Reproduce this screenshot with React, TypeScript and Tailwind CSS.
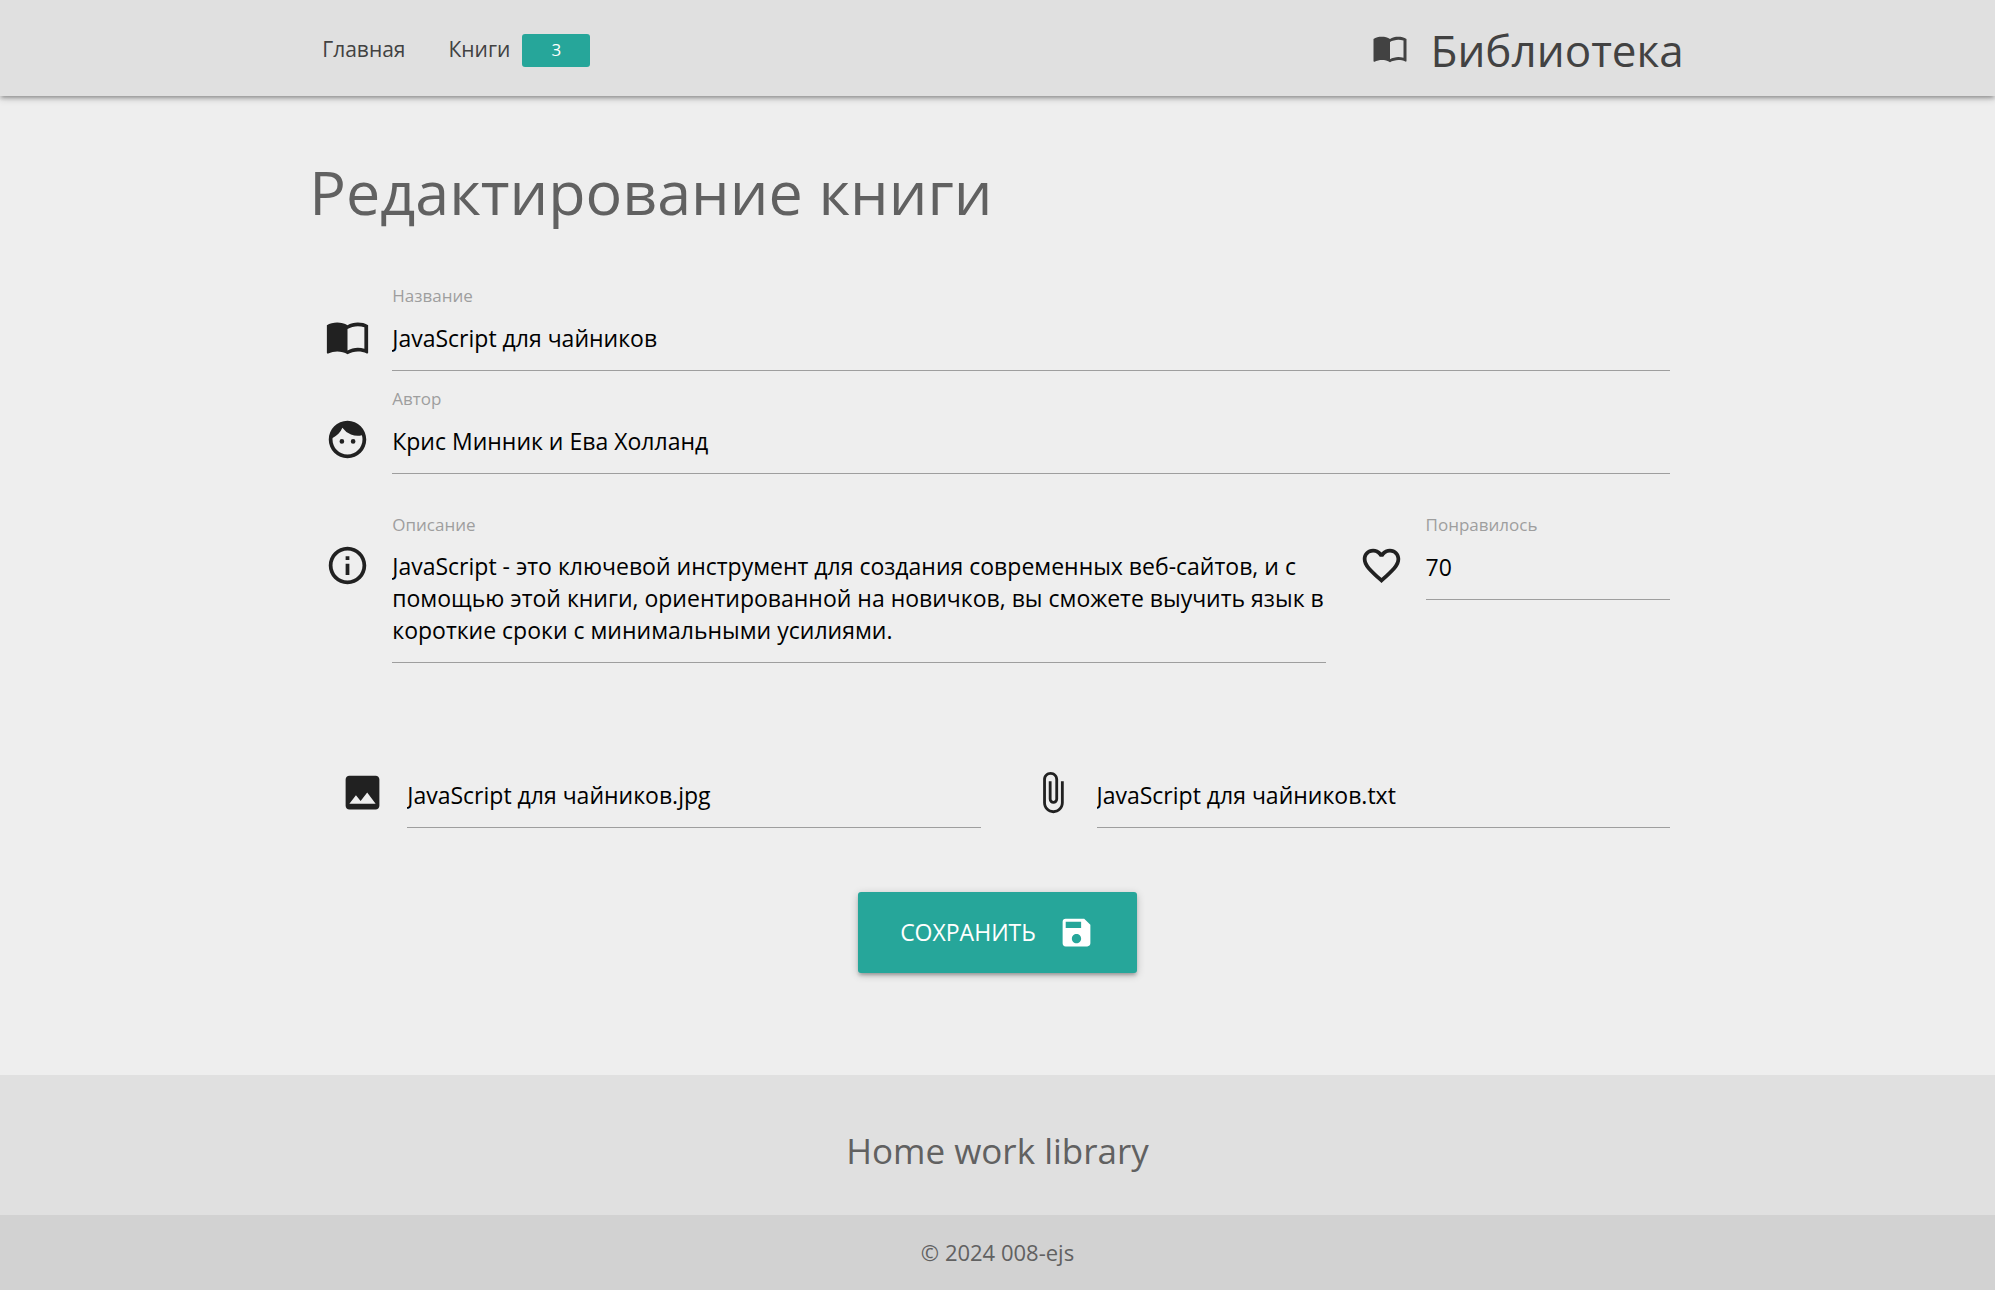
import type { ReactNode } from "react";
import type { IconType } from "react-icons";
import {
  MdAttachFile,
  MdFace,
  MdFavoriteBorder,
  MdImage,
  MdImportContacts,
  MdOutlineInfo,
  MdSave,
} from "react-icons/md";

const inputClass =
  "block h-[62px] w-full border-b border-[#9e9e9e] bg-transparent pb-[3px] text-[23px] text-black outline-none";

type FieldProps = {
  icon: IconType;
  id: string;
  label: string;
  children: ReactNode;
};

function Field({ icon: Icon, id, label, children }: FieldProps) {
  return (
    <div className="flex gap-[22px]">
      <Icon className="mt-[31px] size-[45px] shrink-0 text-[#212121]" aria-hidden />
      <div className="min-w-0 flex-1">
        <label htmlFor={id} className="block text-[17px] leading-[26px] text-[#9e9e9e]">
          {label}
        </label>
        {children}
      </div>
    </div>
  );
}

function FileField({ icon: Icon, id, label, value }: { icon: IconType; id: string; label: string; value: string }) {
  return (
    <div className="flex gap-[22px]">
      <Icon className="mt-1 size-[45px] shrink-0 text-[#212121]" aria-hidden />
      <input id={id} aria-label={label} type="text" defaultValue={value} className={inputClass + " min-w-0 flex-1"} />
    </div>
  );
}

export default function App() {
  return (
    <div className="flex min-h-screen flex-col bg-[#eeeeee] font-['Open_Sans','Noto_Sans',sans-serif] text-[#616161]">
      <header className="bg-[#e0e0e0] text-[#424242] shadow-[0_3px_3px_0_rgba(0,0,0,0.14),0_4px_2px_-3px_rgba(0,0,0,0.12),0_2px_8px_0_rgba(0,0,0,0.2)]">
        <nav className="mx-auto flex h-24 w-[70%] items-center justify-between pt-1 pr-3 pl-[23px]">
          <div className="flex items-center gap-[43px] text-[21px]">
            <a href="#home">Главная</a>
            <a href="#books" className="flex items-center gap-3">
              Книги
              <span className="flex h-[33px] w-[68px] items-center justify-center rounded-[3px] bg-[#26a69a] text-[17px] text-white">
                3
              </span>
            </a>
          </div>
          <a href="#library" className="flex items-center gap-[22px] text-[44px]">
            <MdImportContacts className="mb-1 size-9" aria-hidden />
            Библиотека
          </a>
        </nav>
      </header>

      <main className="mx-auto w-[70%]">
        <h1 className="mt-14 px-[10px] text-[61px] leading-[80px]">Редактирование книги</h1>
        <form className="mt-[51px] px-[26px]">
          <Field icon={MdImportContacts} id="title" label="Название">
            <input id="title" type="text" defaultValue="JavaScript для чайников" className={inputClass} />
          </Field>
          <div className="mt-[15px]">
            <Field icon={MdFace} id="author" label="Автор">
              <input id="author" type="text" defaultValue="Крис Минник и Ева Холланд" className={inputClass} />
            </Field>
          </div>
          <div className="mt-[38px] grid grid-cols-[45fr_14fr] gap-[33px]">
            <Field icon={MdOutlineInfo} id="description" label="Описание">
              <textarea
                id="description"
                rows={3}
                defaultValue="JavaScript - это ключевой инструмент для создания современных веб-сайтов, и с помощью этой книги, ориентированной на новичков, вы сможете выучить язык в короткие сроки с минимальными усилиями."
                className="block w-full resize-none overflow-hidden border-b border-[#9e9e9e] bg-transparent pt-3 pb-4 text-[23px] leading-8 text-black outline-none"
              />
            </Field>
            <Field icon={MdFavoriteBorder} id="likes" label="Понравилось">
              <input id="likes" type="text" inputMode="numeric" defaultValue="70" className={inputClass} />
            </Field>
          </div>
          <div className="mt-[103px] grid grid-cols-2 gap-[49px] pl-[15px]">
            <FileField icon={MdImage} id="cover" label="Обложка" value="JavaScript для чайников.jpg" />
            <FileField icon={MdAttachFile} id="file" label="Файл книги" value="JavaScript для чайников.txt" />
          </div>
          <button
            type="submit"
            className="mx-auto mt-16 flex h-[81px] items-center gap-[22px] rounded-[3px] bg-[#26a69a] px-[42px] text-[23px] text-white uppercase shadow-[0_3px_3px_0_rgba(0,0,0,0.14),0_4px_2px_-3px_rgba(0,0,0,0.12),0_2px_8px_0_rgba(0,0,0,0.2)]"
          >
            Сохранить
            <MdSave className="size-[37px]" aria-hidden />
          </button>
        </form>
      </main>

      <footer className="mt-auto bg-[#e0e0e0] text-center">
        <p className="pt-[52px] pb-10 text-[35px] leading-[48px]">Home work library</p>
        <p className="bg-[#d2d2d2] py-[22px] text-[22px] leading-[31px]">© 2024 008-ejs</p>
      </footer>
    </div>
  );
}
